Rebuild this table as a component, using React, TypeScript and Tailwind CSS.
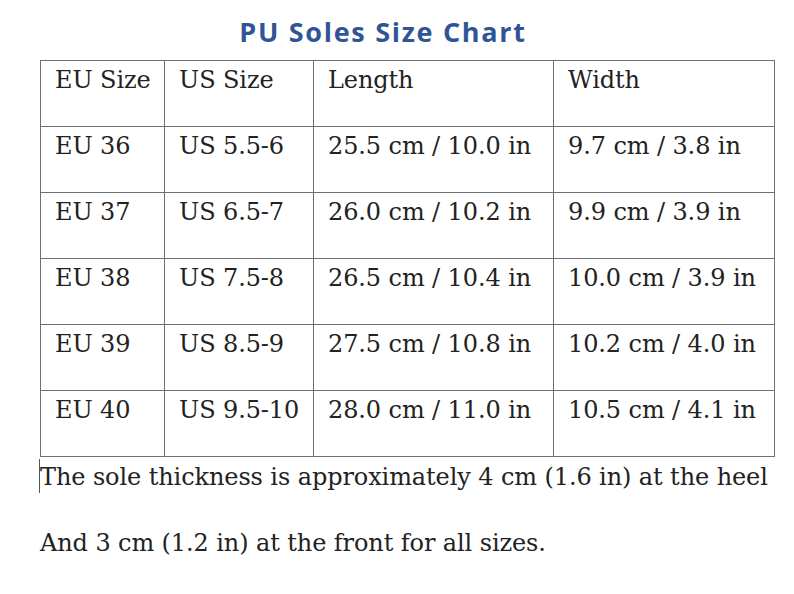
const rows = [
  ["EU Size", "US Size", "Length", "Width"],
  ["EU 36", "US 5.5-6", "25.5 cm / 10.0 in", "9.7 cm / 3.8 in"],
  ["EU 37", "US 6.5-7", "26.0 cm / 10.2 in", "9.9 cm / 3.9 in"],
  ["EU 38", "US 7.5-8", "26.5 cm / 10.4 in", "10.0 cm / 3.9 in"],
  ["EU 39", "US 8.5-9", "27.5 cm / 10.8 in", "10.2 cm / 4.0 in"],
  ["EU 40", "US 9.5-10", "28.0 cm / 11.0 in", "10.5 cm / 4.1 in"],
];

const widths = ["w-[124px]", "w-[149px]", "w-[240px]", "w-[221px]"];

export default function App() {
  return (
    <div className="w-[794px] h-[594px] bg-white overflow-hidden text-[#222]">
      {/* Title */}
      <h1 className="pt-[15px] h-[60px] text-center text-[27px] leading-[34px] font-bold tracking-[1.7px] text-[#2f5597] font-['Open_Sans',sans-serif] pr-[28px]">
        PU Soles Size Chart
      </h1>

      {/* Size table */}
      <table className="ml-[40px] border-collapse table-fixed font-['DejaVu_Serif',serif] text-[24px] leading-[31px] tracking-[-0.1px]">
        <tbody>
          {rows.map((row, r) => (
            <tr key={r} className="h-[66px]">
              {row.map((cell, c) => (
                <td
                  key={c}
                  className={`${widths[c]} border border-[#707070] align-top pl-[14px] pt-[4px] whitespace-nowrap`}
                >
                  {cell}
                </td>
              ))}
            </tr>
          ))}
        </tbody>
      </table>

      {/* Notes below the table */}
      <div className="pl-[40px] font-['DejaVu_Serif',serif] text-[24px] leading-[66px] tracking-[-0.1px] -mt-[13px]">
        <p className="relative">
          <span className="absolute left-[-1px] top-[15px] h-[34px] border-l border-[#555]" />
          The sole thickness is approximately 4 cm (1.6 in) at the heel
        </p>
        <p>And 3 cm (1.2 in) at the front for all sizes.</p>
      </div>
    </div>
  );
}
